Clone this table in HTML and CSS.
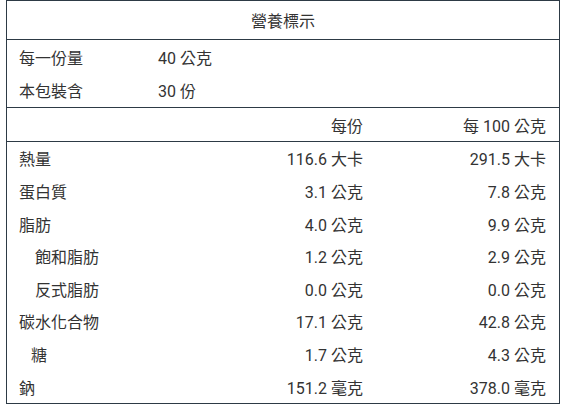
FILE: index.html
```html
<!DOCTYPE html>
<html lang="zh-Hant">
<head>
<meta charset="utf-8">
<title>營養標示</title>
<link rel="stylesheet" href="styles.css">
</head>
<body>
<div class="label">
  <div class="title">營養標示</div>
  <div class="serving">
    <div class="srow"><span>每一份量</span><span>40 公克</span></div>
    <div class="srow"><span>本包裝含</span><span>30 份</span></div>
  </div>
  <div class="head row">
    <span></span><span class="num">每份</span><span class="num">每 100 公克</span>
  </div>
  <div class="body">
    <div class="row"><span>熱量</span><span class="num">116.6 大卡</span><span class="num">291.5 大卡</span></div>
    <div class="row"><span>蛋白質</span><span class="num">3.1 公克</span><span class="num">7.8 公克</span></div>
    <div class="row"><span>脂肪</span><span class="num">4.0 公克</span><span class="num">9.9 公克</span></div>
    <div class="row"><span class="sub">飽和脂肪</span><span class="num">1.2 公克</span><span class="num">2.9 公克</span></div>
    <div class="row"><span class="sub">反式脂肪</span><span class="num">0.0 公克</span><span class="num">0.0 公克</span></div>
    <div class="row"><span>碳水化合物</span><span class="num">17.1 公克</span><span class="num">42.8 公克</span></div>
    <div class="row"><span class="sub2">糖</span><span class="num">1.7 公克</span><span class="num">4.3 公克</span></div>
    <div class="row"><span>鈉</span><span class="num">151.2 毫克</span><span class="num">378.0 毫克</span></div>
  </div>
</div>
</body>
</html>
```
FILE: styles.css
```css
html, body {
  margin: 0;
  padding: 0;
  background: #ffffff;
}
body {
  padding: 0 6px;
  font-family: Roboto, "Noto Sans CJK TC", sans-serif;
  font-size: 16px;
  color: #333333;
}
.label {
  border: 1px solid #2d3a45;
}
.title {
  height: 38px;
  display: flex;
  align-items: center;
  justify-content: center;
  border-bottom: 1px solid #2d3a45;
}
.serving {
  border-bottom: 1px solid #2d3a45;
}
.srow {
  height: 33.5px;
  display: grid;
  grid-template-columns: 139px 1fr;
  align-items: center;
  padding-left: 12px;
}
.row {
  display: grid;
  grid-template-columns: 1fr 150px 183px;
  align-items: center;
  padding: 0 13px 0 12px;
  height: 32.625px;
}
.head {
  height: 33px;
  border-bottom: 1px solid #2d3a45;
}
.num {
  text-align: right;
}
.sub {
  padding-left: 16px;
}
.sub2 {
  padding-left: 12px;
}
```
